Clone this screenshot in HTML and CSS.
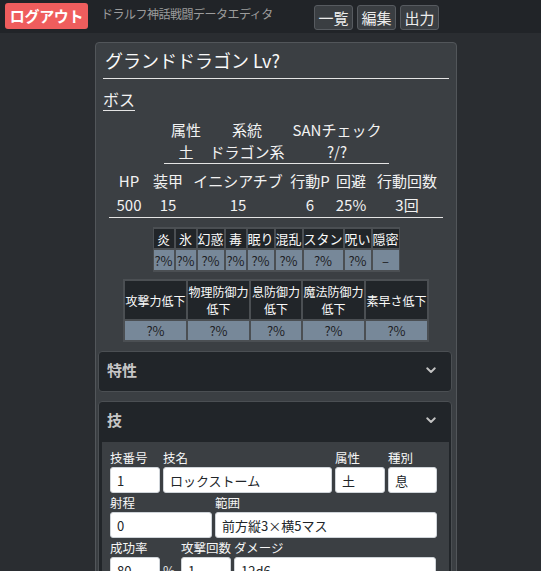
FILE: index.html
```html
<!DOCTYPE html>
<html lang="ja">
<head>
<meta charset="utf-8">
<title>ドラルフ神話戦闘データエディタ</title>
<link rel="stylesheet" href="styles.css">
</head>
<body>
<header class="navbar">
  <button class="btn-logout">ログアウト</button>
  <span class="app-title">ドラルフ神話戦闘データエディタ</span>
  <nav class="nav-buttons">
    <button class="nav-btn">一覧</button>
    <button class="nav-btn">編集</button>
    <button class="nav-btn">出力</button>
  </nav>
</header>

<main class="panel">
  <div class="panel-head">
    <h1 class="enemy-name">グランドドラゴン Lv?</h1>
    <div class="rank"><span class="rank-label">ボス</span></div>

    <div class="info-grid">
      <div>属性</div><div>系統</div><div>SANチェック</div>
      <div>土</div><div>ドラゴン系</div><div>?/?</div>
    </div>

    <div class="stats-grid">
      <div>HP</div><div>装甲</div><div>イニシアチブ</div><div>行動P</div><div>回避</div><div>行動回数</div>
      <div>500</div><div>15</div><div>15</div><div>6</div><div>25%</div><div>3回</div>
    </div>

    <div class="resist-grid">
      <div class="th">炎</div><div class="th">氷</div><div class="th">幻惑</div><div class="th">毒</div><div class="th">眠り</div><div class="th">混乱</div><div class="th">スタン</div><div class="th">呪い</div><div class="th">隠密</div>
      <div class="td">?%</div><div class="td">?%</div><div class="td">?%</div><div class="td">?%</div><div class="td">?%</div><div class="td">?%</div><div class="td">?%</div><div class="td">?%</div><div class="td">–</div>
    </div>

    <div class="debuff-grid">
      <div class="th">攻撃力低下</div><div class="th">物理防御力低下</div><div class="th">息防御力低下</div><div class="th">魔法防御力低下</div><div class="th">素早さ低下</div>
      <div class="td">?%</div><div class="td">?%</div><div class="td">?%</div><div class="td">?%</div><div class="td">?%</div>
    </div>
  </div>

  <div class="accordions">
    <section class="accordion">
      <div class="acc-header">
        <span class="acc-title">特性</span>
        <svg class="chev" width="10" height="7" viewBox="0 0 10 7"><polyline points="1.2,1.3 5,5 8.8,1.3" fill="none" stroke="#c4c4c4" stroke-width="1.9" stroke-linecap="round" stroke-linejoin="round"/></svg>
      </div>
    </section>

    <section class="accordion">
      <div class="acc-header">
        <span class="acc-title">技</span>
        <svg class="chev" width="10" height="7" viewBox="0 0 10 7"><polyline points="1.2,1.3 5,5 8.8,1.3" fill="none" stroke="#c4c4c4" stroke-width="1.9" stroke-linecap="round" stroke-linejoin="round"/></svg>
      </div>
      <div class="acc-body">
        <div class="form-row">
          <label class="field w50"><span class="lbl">技番号</span><input class="inp" value="1"></label>
          <label class="field w169"><span class="lbl">技名</span><input class="inp" value="ロックストーム"></label>
          <label class="field w50"><span class="lbl">属性</span><input class="inp" value="土"></label>
          <label class="field w49"><span class="lbl">種別</span><input class="inp" value="息"></label>
        </div>
        <div class="form-row">
          <label class="field w102"><span class="lbl">射程</span><input class="inp" value="0"></label>
          <label class="field w222"><span class="lbl">範囲</span><input class="inp" value="前方縦3×横5マス"></label>
        </div>
        <div class="form-row">
          <label class="field w68"><span class="lbl">成功率</span><span class="inp-wrap"><input class="inp w50" value="80"><span class="suffix">%</span></span></label>
          <label class="field w50"><span class="lbl">攻撃回数</span><input class="inp" value="1"></label>
          <label class="field w202"><span class="lbl">ダメージ</span><input class="inp" value="12d6"></label>
        </div>
      </div>
    </section>
  </div>
</main>
</body>
</html>
```

FILE: styles.css
```css
* { box-sizing: border-box; }

body {
  margin: 0;
  background: #2a2d31;
  color: #f2f2f2;
  font-family: "Noto Sans CJK JP", "Noto Sans", sans-serif;
}

/* ---------- navbar ---------- */
.navbar {
  display: flex;
  align-items: center;
  height: 33px;
  padding: 0 5px;
  background: #212428;
}

.btn-logout {
  width: 83px;
  height: 26px;
  margin-top: -1px;
  padding: 0;
  border: none;
  border-radius: 3px;
  background: #ef5d5d;
  color: #fff;
  font-family: inherit;
  font-size: 15px;
  font-weight: bold;
  letter-spacing: -0.3px;
  line-height: 26px;
}

.app-title {
  flex: 0 0 226px;
  padding-left: 13px;
  color: #9c9c9c;
  font-size: 12px;
  letter-spacing: -0.5px;
  margin-top: -6px;
}

.nav-buttons {
  display: flex;
  gap: 4px;
  margin-top: 2px;
}

.nav-btn {
  width: 39px;
  height: 25px;
  padding: 0;
  border: 1px solid #575b60;
  border-radius: 3px;
  background: #3a3e42;
  color: #ececec;
  font-family: inherit;
  font-size: 15px;
  line-height: 22px;
}

/* ---------- panel ---------- */
.panel {
  width: 362px;
  margin: 9px 0 0 95px;
  padding-bottom: 20px;
  background: #3b3f43;
  border: 1px solid #52565a;
  border-radius: 4px;
}

.panel-head {
  padding: 0 7px;
}

.enemy-name {
  margin: 0;
  padding: 5px 2px 6px;
  font-size: 18px;
  font-weight: normal;
  line-height: 24px;
  color: #fafafa;
  border-bottom: 1px solid #e4e4e4;
}

.rank {
  margin-top: 8px;
}

.rank-label {
  display: inline-block;
  font-size: 16px;
  line-height: 22px;
  border-bottom: 1px solid #e4e4e4;
}

.info-grid {
  display: grid;
  grid-template-columns: 45px 77px 103px;
  width: 225px;
  margin: 8px auto 0;
  font-size: 15px;
  line-height: 22px;
  text-align: center;
  border-bottom: 1px solid #e4e4e4;
}

.stats-grid {
  display: grid;
  grid-template-columns: 40px 38px 102px 42px 40px 72px;
  width: 334px;
  margin: 5px auto 0;
  font-size: 15px;
  line-height: 24px;
  text-align: center;
  white-space: nowrap;
  border-bottom: 1px solid #e4e4e4;
}

.resist-grid {
  display: grid;
  grid-template-columns: 20px 20px 26px 20px 26px 26px 39px 26px 26px;
  grid-template-rows: 19px 20px;
  gap: 2px;
  width: fit-content;
  margin: 9px auto 0;
  padding: 2px 1px;
  background: #4b4f53;
  font-size: 13px;
  text-align: center;
  white-space: nowrap;
}

.debuff-grid {
  display: grid;
  grid-template-columns: 61px 61px 50px 61px 61px;
  grid-template-rows: 38px 19px;
  gap: 2px;
  width: fit-content;
  margin: 7px auto 0;
  padding: 2px;
  background: #4b4f53;
  font-size: 12px;
  text-align: center;
}

.th {
  display: flex;
  align-items: center;
  justify-content: center;
  background: #212529;
  color: #fafafa;
  line-height: 17px;
}

.resist-grid .th { line-height: 19px; }

.td {
  display: flex;
  align-items: center;
  justify-content: center;
  background: #778899;
  color: #1d2024;
  font-size: 13px;
}

/* ---------- accordions ---------- */
.accordions {
  padding: 9px 4px 0 2px;
  display: flex;
  flex-direction: column;
  gap: 9px;
}

.accordion {
  background: #212529;
  border: 1px solid #4b4f53;
  border-radius: 4px;
}

.acc-header {
  display: flex;
  align-items: flex-start;
  justify-content: space-between;
  height: 39px;
  padding: 7px 15px 0 8px;
}

.acc-title {
  font-size: 15px;
  font-weight: bold;
  line-height: 22px;
  color: #c6c6c6;
}

.chev {
  margin-top: 8px;
}

.acc-body {
  margin: 1px 2px 0 3px;
  padding: 6px 10px 4px 8px;
  background: #3b3f43;
}

.form-row {
  display: flex;
  gap: 3px;
}

.field {
  display: flex;
  flex-direction: column;
}

.lbl {
  font-size: 12.5px;
  line-height: 19px;
  color: #f6f6f6;
  white-space: nowrap;
}

.inp {
  width: 100%;
  height: 26px;
  padding: 0 6px;
  border: 1px solid #cfd4d9;
  border-radius: 3px;
  background: #fff;
  color: #212529;
  font-family: inherit;
  font-size: 13px;
}

.inp-wrap {
  display: flex;
  align-items: center;
}

.suffix {
  padding-left: 3px;
  font-size: 13px;
  color: #e6e6e6;
}

.w49 { width: 49px; }
.w50 { width: 50px; flex: 0 0 50px; }
.w68 { width: 68px; }
.w102 { width: 102px; }
.w169 { width: 169px; }
.w202 { width: 202px; }
.w222 { width: 222px; }
```
